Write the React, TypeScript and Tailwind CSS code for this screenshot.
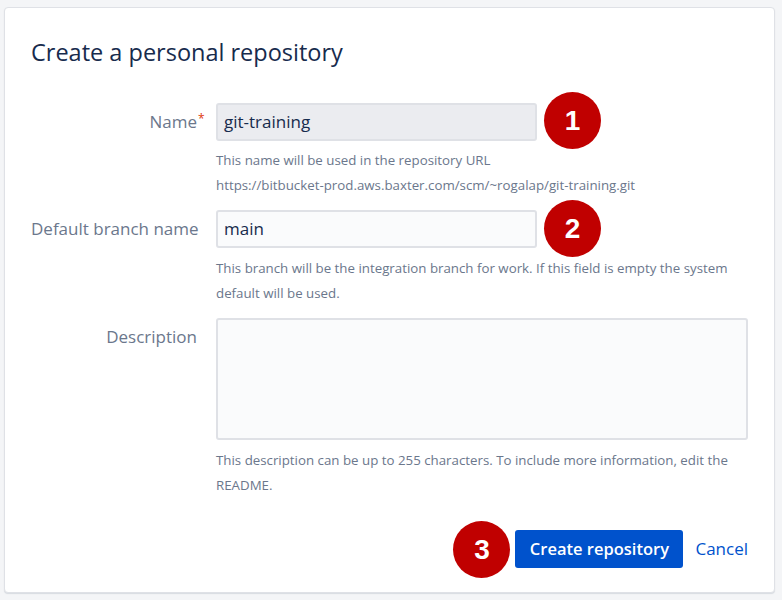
import React from 'react';

const font = { fontFamily: '"Open Sans", "Noto Sans", sans-serif' };

const Badge: React.FC<{ n: number; className: string }> = ({ n, className }) => (
  <div
    className={`absolute w-[57px] h-[57px] rounded-full bg-[#c00000] text-white flex items-center justify-center text-[28px] font-bold ${className}`}
    style={{ fontFamily: '"Liberation Sans", Arial, sans-serif' }}
  >
    {n}
  </div>
);

export default function App() {
  return (
    <div className="w-[782px] h-[600px] bg-[#f4f5f7] pt-[7px] pl-[4px] pr-[7px]" style={font}>
      <div className="h-[586px] bg-white border border-[#dfe1e6] rounded-[4px] shadow-[0_1px_1px_rgba(9,30,66,0.12)] pl-[26px] pt-[28px]">
        <h1 className="text-[23.5px] leading-[32px] text-[#172b4d]">Create a personal repository</h1>

        <div className="mt-[35px] grid grid-cols-[166px_532px] gap-x-[19px]">
          {/* Name */}
          <label className="whitespace-nowrap text-right text-[17px] leading-[38px] text-[#6b778c]">
            <span className="relative">
              Name
              <span className="absolute left-full top-[3px] ml-[1px] text-[#de350b] text-[12px] leading-none">*</span>
            </span>
          </label>
          <div>
            <div className="relative w-[321px]">
              <div className="h-[38px] bg-[#ebecf0] border-2 border-[#dfe1e6] rounded-[3px] px-[6px] flex items-center text-[17px] text-[#172b4d]">
                git-training
              </div>
              <Badge n={1} className="left-[328px] top-[-11px]" />
            </div>
            <div className="mt-[7px] text-[13.3px] leading-[25px] text-[#6b778c]">
              <div>This name will be used in the repository URL</div>
              <div>https://bitbucket-prod.aws.baxter.com/scm/~rogalap/git-training.git</div>
            </div>
          </div>

          {/* Default branch */}
          <label className="whitespace-nowrap mt-[12px] text-right text-[17px] leading-[38px] text-[#6b778c]">
            Default branch name
          </label>
          <div className="mt-[12px]">
            <div className="relative w-[321px]">
              <div className="h-[38px] bg-[#fafbfc] border-2 border-[#dfe1e6] rounded-[3px] px-[6px] flex items-center text-[17px] text-[#172b4d]">
                main
              </div>
              <Badge n={2} className="left-[328px] top-[-10px]" />
            </div>
            <div className="mt-[8px] text-[13.3px] leading-[25px] text-[#6b778c]">
              This branch will be the integration branch for work. If this field is empty the system default will be used.
            </div>
          </div>

          {/* Description */}
          <label className="whitespace-nowrap mt-[12px] text-right text-[17px] leading-[38px] text-[#6b778c]">
            Description
          </label>
          <div className="mt-[12px]">
            <div className="h-[122px] bg-[#fafbfc] border-2 border-[#dfe1e6] rounded-[3px]" />
            <div className="mt-[8px] text-[13.3px] leading-[25px] text-[#6b778c]">
              This description can be up to 255 characters. To include more information, edit the README.
            </div>
          </div>
        </div>

        <div className="mt-[32px] w-[717px] flex justify-end items-center gap-[12px]">
          <div className="relative">
            <Badge n={3} className="left-[-62px] top-[-9px]" />
            <button className="h-[38px] w-[168px] bg-[#0052cc] rounded-[3px] text-white text-[16.5px] font-semibold">
              Create repository
            </button>
          </div>
          <button className="text-[17px] text-[#0052cc]">Cancel</button>
        </div>
      </div>
    </div>
  );
}
